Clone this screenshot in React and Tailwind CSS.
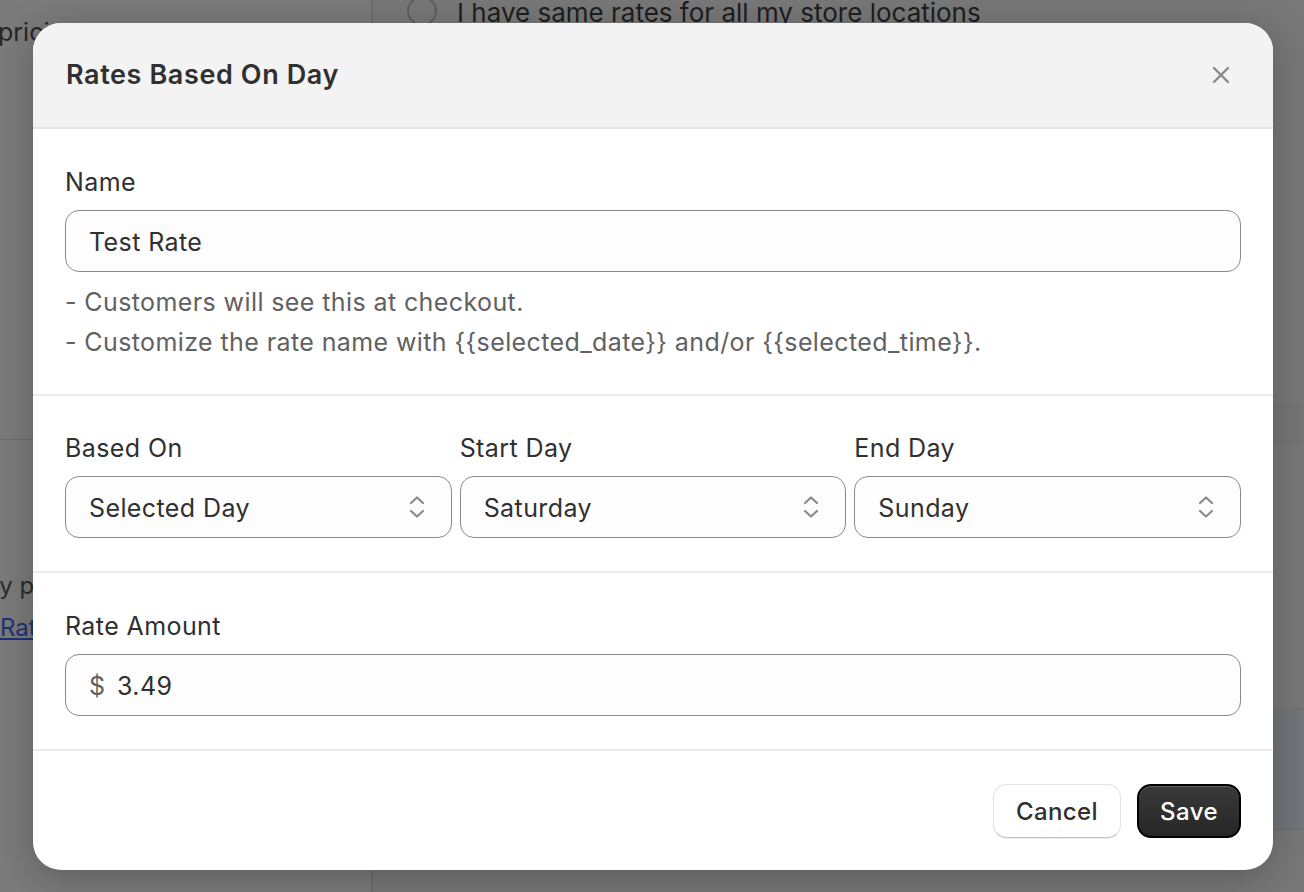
import React from 'react';

const font = { fontFamily: 'Inter, "Noto Sans", sans-serif' };

const SelectIcon = () => (
    <svg width="20" height="26" viewBox="0 0 20 26" fill="none" stroke="#8a8a8a" strokeWidth="2.2" strokeLinecap="round" strokeLinejoin="round">
        <path d="M4 9 L10 3.5 L16 9" />
        <path d="M4 17 L10 22.5 L16 17" />
    </svg>
);

const CloseIcon = () => (
    <svg width="18" height="18" viewBox="0 0 18 18" fill="none" stroke="#8a8a8a" strokeWidth="2.4" strokeLinecap="round">
        <path d="M2 2 L16 16" />
        <path d="M16 2 L2 16" />
    </svg>
);

const SelectBox = ({ label, value }) => (
    <div className="flex-1 flex flex-col gap-[10px]">
        <label className="text-[25px] leading-[36px] tracking-[0.4px] text-[#303030]">{label}</label>
        <div className="h-[62px] rounded-[14px] border-[1.5px] border-[#8a8a8a] bg-[#fdfdfd] flex items-center justify-between pl-[23px] pr-[24px]">
            <span className="text-[25px] tracking-[0.4px] text-[#303030] pt-[3px]">{value}</span>
            <SelectIcon />
        </div>
    </div>
);

export default function App() {
    return (
        <div className="relative w-[1304px] h-[892px] overflow-hidden bg-[#787878]" style={font}>
            {/* page behind the overlay */}
            <div className="flex h-full">
                <div className="w-[373px] bg-[#7b7b7b] border-r-2 border-[#6f6f6f] flex flex-col">
                    <div className="h-[440px] border-b border-[#6c6c6c] pt-[14px]">
                        <span className="text-[25px] text-[#262626] -ml-[2px]">pricing</span>
                    </div>
                    <div className="pt-[128px] flex flex-col gap-[6px]">
                        <span className="text-[24px] text-[#2c2c2c] -ml-[15px]">by pricing</span>
                        <span className="text-[24px] text-[#1b3475] underline">Rates</span>
                    </div>
                </div>
                <div className="flex-1 flex flex-col">
                    <div className="flex items-center gap-[20px] pl-[34px] h-[26px]">
                        <div className="w-[30px] h-[30px] rounded-full border-2 border-[#5e5e5e] shrink-0 mt-[-4px]" />
                        <span className="text-[26px] text-[#1e1e1e] leading-[26px]">I have same rates for all my store locations</span>
                    </div>
                    <div className="mt-[380px] h-[36px] border-y border-[#6d6d6d] bg-[#767676]" />
                    <div className="mt-[266px] h-[122px] bg-[#72757a] border-y border-[#6e6e6e]" />
                </div>
            </div>

            {/* modal */}
            <div className="absolute left-[33px] top-[23px] w-[1240px] h-[847px] rounded-[28px] bg-white overflow-hidden shadow-[0_8px_40px_rgba(0,0,0,0.25)] flex flex-col">
                <div className="h-[106px] shrink-0 bg-[#f3f3f3] border-b-2 border-[#e3e3e3] flex items-center justify-between pl-[33px] pr-[43px]">
                    <h1 className="text-[27px] tracking-[0.6px] font-semibold text-[#303030]">Rates Based On Day</h1>
                    <button><CloseIcon /></button>
                </div>

                <div className="px-[32px] pt-[35px] pb-[32px] border-b-2 border-[#ebebeb]">
                    <label className="block text-[25px] leading-[36px] tracking-[0.4px] text-[#303030]">Name</label>
                    <div className="mt-[10px] h-[62px] rounded-[14px] border-[1.5px] border-[#8a8a8a] bg-[#fdfdfd] flex items-center pl-[23px]">
                        <span className="text-[25px] tracking-[0.4px] text-[#303030] pt-[3px]">Test Rate</span>
                    </div>
                    <div className="mt-[10px] text-[25px] leading-[40px] tracking-[0.4px] text-[#616161]">
                        <p>- Customers will see this at checkout.</p>
                        <p>- Customize the rate name with {'{{selected_date}}'} and/or {'{{selected_time}}'}.</p>
                    </div>
                </div>

                <div className="px-[32px] pt-[34px] pb-[33px] border-b-2 border-[#ebebeb] flex gap-[8px]">
                    <SelectBox label="Based On" value="Selected Day" />
                    <SelectBox label="Start Day" value="Saturday" />
                    <SelectBox label="End Day" value="Sunday" />
                </div>

                <div className="px-[32px] pt-[35px] pb-[33px] border-b-2 border-[#ebebeb]">
                    <label className="block text-[25px] leading-[36px] tracking-[0.4px] text-[#303030]">Rate Amount</label>
                    <div className="mt-[10px] h-[62px] rounded-[14px] border-[1.5px] border-[#8a8a8a] bg-[#fdfdfd] flex items-center pl-[23px] gap-[12px] pt-[3px]">
                        <span className="text-[25px] text-[#616161]">$</span>
                        <span className="text-[25px] tracking-[0.4px] text-[#303030]">3.49</span>
                    </div>
                </div>

                <div className="flex justify-end gap-[16px] px-[32px] pt-[33px]">
                    <button className="h-[54px] w-[128px] rounded-[14px] bg-white border-[1.5px] border-[#e3e3e3] border-b-[#c4c4c4] shadow-[0_1px_0_rgba(0,0,0,0.08)] text-[24px] font-medium tracking-[0.4px] text-[#303030] pt-[2px]">
                        Cancel
                    </button>
                    <button className="h-[54px] w-[104px] rounded-[14px] bg-gradient-to-b from-[#3a3a3a] to-[#262626] border-2 border-black shadow-[inset_0_1px_0_rgba(255,255,255,0.2)] text-[24px] font-medium tracking-[0.4px] text-white pt-[2px]">
                        Save
                    </button>
                </div>
            </div>
        </div>
    );
}
